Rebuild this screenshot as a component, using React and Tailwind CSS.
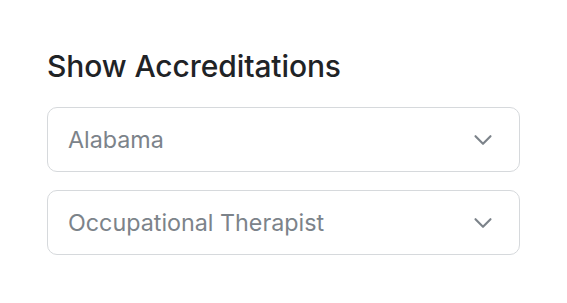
import { ChevronDown } from 'lucide-react'

function Select({ label }) {
  return (
    <div className="flex h-[65px] w-full items-center justify-between rounded-[10px] border border-[#d6d9dc] bg-white pl-[20px] pr-[21px]">
      <span className="pt-[2px] text-[23.3px] text-[#7c838a]">{label}</span>
      <ChevronDown size={30} strokeWidth={1.7} className="text-[#7c838a]" />
    </div>
  )
}

export default function App() {
  return (
    <div className="min-h-screen bg-white px-[47px] pt-[48px] font-['Inter',sans-serif]">
      <div className="w-[473px]">
        <h2 className="text-[30px] font-medium leading-[36px] tracking-[-0.1px] text-[#1f2326]">Show Accreditations</h2>
        <div className="mt-[23px] flex flex-col gap-[18px]">
          <Select label="Alabama" />
          <Select label="Occupational Therapist" />
        </div>
      </div>
    </div>
  )
}
